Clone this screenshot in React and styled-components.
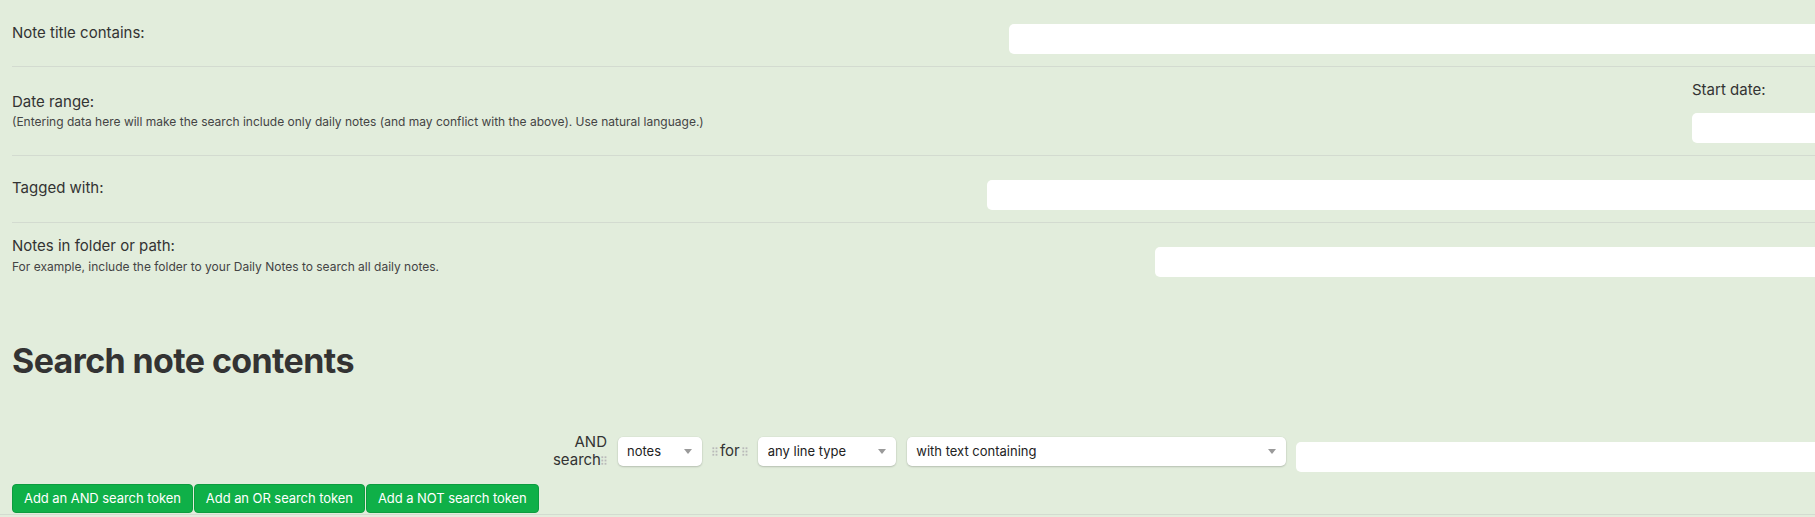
import React from "react";
import styled, { createGlobalStyle } from "styled-components";

const GlobalStyle = createGlobalStyle`
  body {
    margin: 0;
    overflow: hidden;
    background-color: #e2eddc;
    font-family: Inter, "Noto Sans", sans-serif;
    color: #333;
  }
`;

const Page = styled.div`
  width: 1850px;
  padding-left: 12px;
  box-sizing: border-box;
`;

const SettingRow = styled.div`
  display: flex;
  align-items: center;
  justify-content: space-between;
  padding: 12px 0;
  border-top: ${(p) => (p.$first ? "none" : "1px solid #d3dbd0")};
`;

const Info = styled.div`
  flex: 1 1 auto;
  min-width: 0;
`;

const Name = styled.div`
  font-size: 15px;
  line-height: 22.5px;
  color: #333;
`;

const Desc = styled.div`
  font-size: 12px;
  line-height: 18px;
  color: #444;
`;

const Control = styled.div`
  flex: 0 0 ${(p) => p.$width}px;
  display: flex;
  flex-direction: column;
`;

const ControlLabel = styled.div`
  font-size: 15px;
  line-height: 22.5px;
  color: #333;
  margin-bottom: -1px;
`;

const TextInput = styled.input`
  display: block;
  box-sizing: border-box;
  width: ${(p) => (p.$width ? `${p.$width}px` : "100%")};
  height: 30px;
  margin: 12px 0 0;
  border: none;
  border-radius: 5px;
  background: #fff;
  font-family: inherit;
  font-size: 13px;
  padding: 0 10px;
  outline: none;
`;

const Heading = styled.h2`
  margin: 52px 0 0;
  font-size: 34px;
  line-height: 1.2;
  font-weight: 700;
  color: #333;
  letter-spacing: -0.018em;
`;

const TokenRow = styled.div`
  display: flex;
  align-items: center;
  gap: 10.5px;
  margin-top: 49px;
`;

const TokenLabel = styled.div`
  flex: 0 0 595px;
  text-align: right;
  font-size: 15px;
  line-height: 18px;
  color: #333;
`;

const Joiner = styled.div`
  flex: 0 0 auto;
  font-size: 15px;
  line-height: 18px;
  color: #333;
  display: flex;
  align-items: baseline;
  gap: 2px;
`;

const SelectWrap = styled.div`
  position: relative;
  flex: 0 0 ${(p) => p.$width}px;
  height: 28.5px;
  background: #fff;
  border-radius: 5px;
  box-shadow: 0 1px 2px rgba(0, 0, 0, 0.18), 0 0 0 0.5px rgba(0, 0, 0, 0.04);

  &::after {
    content: "";
    position: absolute;
    right: 10px;
    top: 12px;
    border-left: 4px solid transparent;
    border-right: 4px solid transparent;
    border-top: 5px solid #9a9a9a;
    pointer-events: none;
  }
`;

const Select = styled.select`
  appearance: none;
  width: 100%;
  height: 100%;
  border: none;
  background: transparent;
  font-family: inherit;
  font-size: 13px;
  color: #222;
  padding: 0 24px 0 9.5px;
  outline: none;
`;

const ButtonRow = styled.div`
  display: flex;
  gap: 1px;
  margin-top: 11.5px;
`;

const GreenButton = styled.button`
  height: 29px;
  padding: 0 11px;
  border: 1px solid #0c9c3f;
  border-radius: 4px;
  background: #0fb048;
  color: #fff;
  font-family: inherit;
  font-size: 13px;
  letter-spacing: -0.005em;
`;

const BottomRule = styled.div`
  margin-top: 1px;
  margin-left: -12px;
  border-top: 1px solid #d3dbd0;
`;

const Grip = () => (
  <svg width="6" height="9" viewBox="0 0 6 9">
    {[0.4, 3.6].map((x) =>
      [0.3, 3.6, 6.9].map((y) => (
        <rect key={`${x}-${y}`} x={x} y={y} width="1.8" height="1.8" fill="#b9b9b9" />
      ))
    )}
  </svg>
);

const SelectField = ({ width, value }) => (
  <SelectWrap $width={width}>
    <Select defaultValue={value}>
      <option>{value}</option>
    </Select>
  </SelectWrap>
);

const App = () => {
  return (
    <>
      <GlobalStyle />
      <Page>
        <SettingRow $first>
          <Info>
            <Name>Note title contains:</Name>
          </Info>
          <Control $width={841}>
            <TextInput type="text" />
          </Control>
        </SettingRow>

        <SettingRow>
          <Info>
            <Name>Date range:</Name>
            <Desc>
              (Entering data here will make the search include only daily notes
              (and may conflict with the above). Use natural language.)
            </Desc>
          </Info>
          <Control $width={158}>
            <ControlLabel>Start date:</ControlLabel>
            <TextInput type="text" />
          </Control>
        </SettingRow>

        <SettingRow>
          <Info>
            <Name>Tagged with:</Name>
          </Info>
          <Control $width={863}>
            <TextInput type="text" />
          </Control>
        </SettingRow>

        <SettingRow>
          <Info>
            <Name>Notes in folder or path:</Name>
            <Desc>
              For example, include the folder to your Daily Notes to search all
              daily notes.
            </Desc>
          </Info>
          <Control $width={695}>
            <TextInput type="text" />
          </Control>
        </SettingRow>

        <Heading>Search note contents</Heading>

        <TokenRow>
          <TokenLabel>
            AND
            <br />
            search
            <Grip />
          </TokenLabel>
          <SelectField width={84} value="notes" />
          <Joiner>
            <Grip />
            for
            <Grip />
          </Joiner>
          <SelectField width={138} value="any line type" />
          <SelectField width={379} value="with text containing" />
          <TextInput type="text" $width={560} />
        </TokenRow>

        <ButtonRow>
          <GreenButton>Add an AND search token</GreenButton>
          <GreenButton>Add an OR search token</GreenButton>
          <GreenButton>Add a NOT search token</GreenButton>
        </ButtonRow>
        <BottomRule />
      </Page>
    </>
  );
};

export default App;
